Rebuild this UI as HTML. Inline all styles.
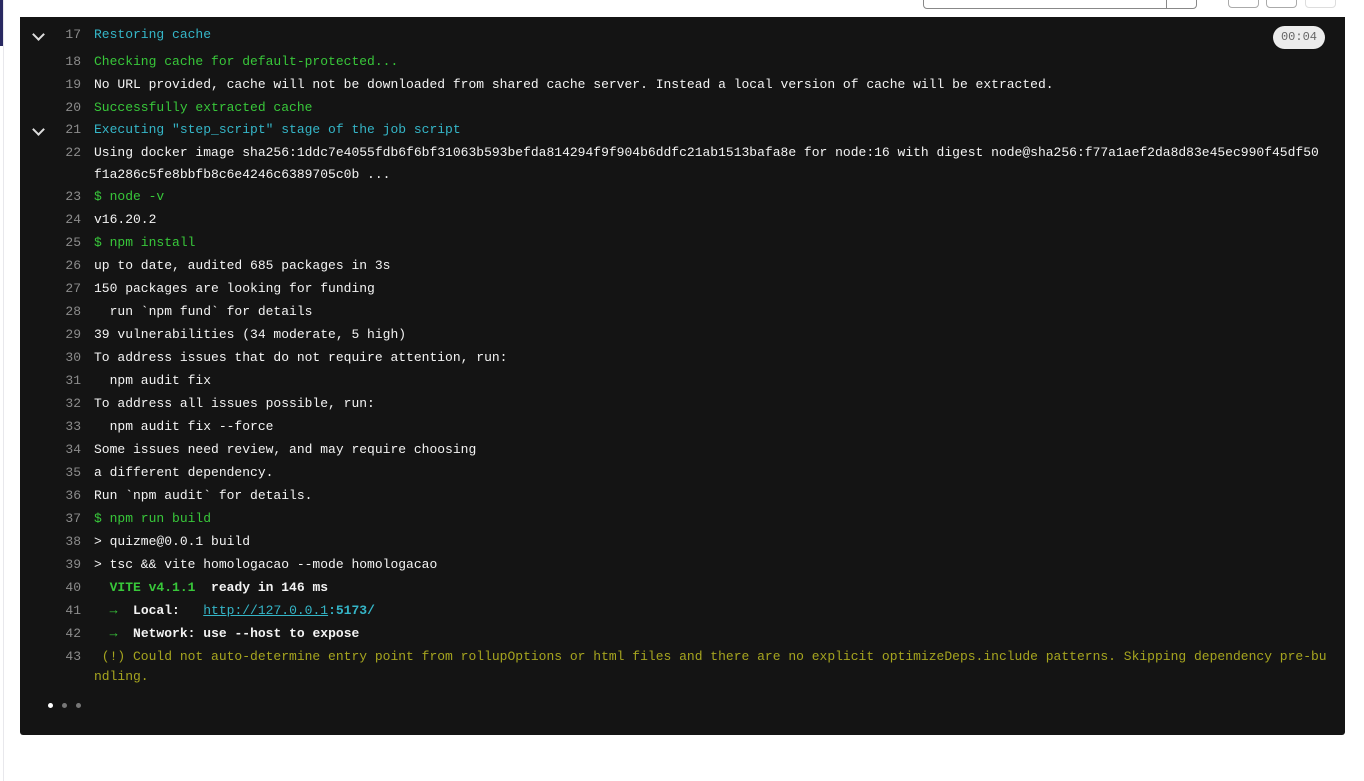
<!DOCTYPE html>
<html><head><meta charset="utf-8"><style>
body{margin:0;width:1364px;height:781px;background:#fff;position:relative;overflow:hidden;font-family:"Liberation Mono",monospace}
.nav{position:absolute;left:0;top:0;width:3px;height:46px;background:#292961}
.side{position:absolute;left:3px;top:0;width:1px;height:781px;background:#e8e8ec}
.hdr{position:absolute;left:20px;top:0;width:1325px;height:17px;background:#fff;border-bottom:1px solid #ddd}
.inp{position:absolute;left:903px;top:-4px;width:272px;height:11px;border:1px solid #888;border-radius:4px}
.inp:after{content:"";position:absolute;left:242px;top:0;width:1px;height:11px;background:#888}
.btn{position:absolute;top:-4px;width:29px;height:10px;border:1px solid #aaa;border-radius:4px}
.panel{position:absolute;left:20px;top:17px;width:1325px;height:718px;background:#141414;border-radius:0 0 3px 3px}
.l{position:absolute;left:0;height:23px;line-height:23px;font-size:13px;white-space:pre;color:#f4f4f4}
.n{position:absolute;left:24px;width:37px;text-align:right;color:#8c8c8c}
.t{position:absolute;left:74px}
.c{color:#35b6c8}.g{color:#38c73a}.y{color:#a6a51f}.b{font-weight:bold}
.chev{position:absolute;left:14px;top:7px;width:7px;height:7px;border-right:2px solid #ddd;border-bottom:2px solid #ddd;transform:rotate(45deg)}
.time{position:absolute;left:1253px;top:9px;width:52px;height:23px;border-radius:12px;background:#ececec;color:#666;font-size:12px;line-height:23px;text-align:center}
a{color:#35b6c8;text-decoration:underline}
.dot{position:absolute;top:686px;width:5px;height:5px;border-radius:50%;background:#777}
</style></head><body>
<div class="nav"></div><div class="side"></div>
<div class="hdr"><div class="inp"></div><div class="btn" style="left:1208px"></div><div class="btn" style="left:1246px"></div><div class="btn" style="left:1285px;border-color:#ddd"></div></div>
<div class="panel">
<div class="time">00:04</div>
<div class="l" style="top:6px"><div class="chev"></div><span class="n">17</span><span class="t c">Restoring cache</span></div>
<div class="l" style="top:33px"><span class="n">18</span><span class="t g">Checking cache for default-protected...</span></div>
<div class="l" style="top:56px"><span class="n">19</span><span class="t">No URL provided, cache will not be downloaded from shared cache server. Instead a local version of cache will be extracted.</span></div>
<div class="l" style="top:79px"><span class="n">20</span><span class="t g">Successfully extracted cache</span></div>
<div class="l" style="top:101px"><div class="chev"></div><span class="n">21</span><span class="t c">Executing "step_script" stage of the job script</span></div>
<div class="l" style="top:124px"><span class="n">22</span><span class="t">Using docker image sha256:1ddc7e4055fdb6f6bf31063b593befda814294f9f904b6ddfc21ab1513bafa8e for node:16 with digest node@sha256:f77a1aef2da8d83e45ec990f45df50</span></div>
<div class="l" style="top:146px"><span class="t">f1a286c5fe8bbfb8c6e4246c6389705c0b ...</span></div>
<div class="l" style="top:168px"><span class="n">23</span><span class="t g">$ node -v</span></div>
<div class="l" style="top:191px"><span class="n">24</span><span class="t">v16.20.2</span></div>
<div class="l" style="top:214px"><span class="n">25</span><span class="t g">$ npm install</span></div>
<div class="l" style="top:237px"><span class="n">26</span><span class="t">up to date, audited 685 packages in 3s</span></div>
<div class="l" style="top:260px"><span class="n">27</span><span class="t">150 packages are looking for funding</span></div>
<div class="l" style="top:283px"><span class="n">28</span><span class="t">  run `npm fund` for details</span></div>
<div class="l" style="top:306px"><span class="n">29</span><span class="t">39 vulnerabilities (34 moderate, 5 high)</span></div>
<div class="l" style="top:329px"><span class="n">30</span><span class="t">To address issues that do not require attention, run:</span></div>
<div class="l" style="top:352px"><span class="n">31</span><span class="t">  npm audit fix</span></div>
<div class="l" style="top:375px"><span class="n">32</span><span class="t">To address all issues possible, run:</span></div>
<div class="l" style="top:398px"><span class="n">33</span><span class="t">  npm audit fix --force</span></div>
<div class="l" style="top:421px"><span class="n">34</span><span class="t">Some issues need review, and may require choosing</span></div>
<div class="l" style="top:444px"><span class="n">35</span><span class="t">a different dependency.</span></div>
<div class="l" style="top:467px"><span class="n">36</span><span class="t">Run `npm audit` for details.</span></div>
<div class="l" style="top:490px"><span class="n">37</span><span class="t g">$ npm run build</span></div>
<div class="l" style="top:513px"><span class="n">38</span><span class="t">&gt; quizme@0.0.1 build</span></div>
<div class="l" style="top:536px"><span class="n">39</span><span class="t">&gt; tsc &amp;&amp; vite homologacao --mode homologacao</span></div>
<div class="l" style="top:559px"><span class="n">40</span><span class="t">  <span class="g b">VITE v4.1.1</span>  <span class="b">ready in 146 ms</span></span></div>
<div class="l" style="top:582px"><span class="n">41</span><span class="t">  <span class="g">→</span>  <span class="b">Local:</span>   <a>http://127.0.0.1</a><span class="c b">:5173/</span></span></div>
<div class="l" style="top:605px"><span class="n">42</span><span class="t">  <span class="g">→</span>  <span class="b">Network:</span> <span class="b">use --host to expose</span></span></div>
<div class="l" style="top:628px"><span class="n">43</span><span class="t y"> (!) Could not auto-determine entry point from rollupOptions or html files and there are no explicit optimizeDeps.include patterns. Skipping dependency pre-bu</span></div>
<div class="l" style="top:648px"><span class="t y">ndling.</span></div>
<div class="dot" style="left:28px;background:#fff"></div><div class="dot" style="left:42px"></div><div class="dot" style="left:56px"></div>
</div>
</body></html>
